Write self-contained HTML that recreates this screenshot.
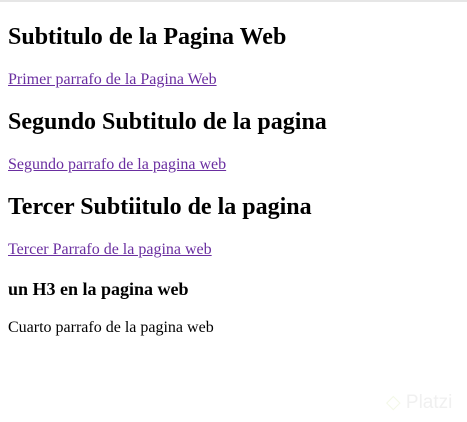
<!DOCTYPE html>
<html><head><style>
html,body{margin:0;background:#fff}
body{padding:2px 8px 0;font-family:"Liberation Serif",serif;color:#000;border-top:2px solid #e6e6e6}
h2{font-size:24px;margin:20px 0;line-height:27px}
h3{font-size:18px;margin:19px 0;line-height:22px}
p{font-size:16px;margin:16px 0;line-height:18px}
a{color:#6a2ea0}
.logo{position:absolute;left:386px;top:391px;font-family:"Liberation Sans",sans-serif;font-size:19px;color:#f0f0f0;white-space:nowrap}
</style></head><body>
<h2>Subtitulo de la Pagina Web</h2>
<p><a href="#">Primer parrafo de la Pagina Web</a></p>
<h2>Segundo Subtitulo de la pagina</h2>
<p><a href="#">Segundo parrafo de la pagina web</a></p>
<h2>Tercer Subtiitulo de la pagina</h2>
<p><a href="#">Tercer Parrafo de la pagina web</a></p>
<h3>un H3 en la pagina web</h3>
<p>Cuarto parrafo de la pagina web</p>
<div class="logo"><span style="color:#f3f8e8">◇</span> Platzi</div>
</body></html>
